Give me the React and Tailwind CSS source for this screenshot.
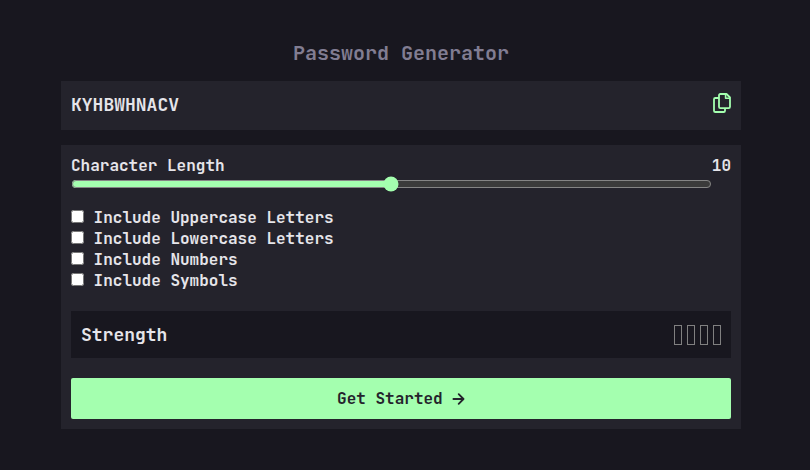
import { useState } from "react";

const OPTIONS = [
  "Include Uppercase Letters",
  "Include Lowercase Letters",
  "Include Numbers",
  "Include Symbols",
];

function CopyIcon() {
  return (
    <svg width="18" height="20" viewBox="0 0 18 20" fill="none" stroke="currentColor" strokeWidth="1.8" strokeLinejoin="round">
      <path d="M7.3 1h6.2L17 4.5v9.3a1.3 1.3 0 0 1-1.3 1.3H7.3A1.3 1.3 0 0 1 6 13.8V2.3A1.3 1.3 0 0 1 7.3 1z" />
      <path d="M12.6 1v4.3H17" strokeWidth="1.6" />
      <path d="M6 5H2.3A1.3 1.3 0 0 0 1 6.3v11.4A1.3 1.3 0 0 0 2.3 19h8.4a1.3 1.3 0 0 0 1.3-1.3v-2.5" />
    </svg>
  );
}

function ArrowIcon() {
  return (
    <svg className="h-[12px] w-[12.6px]" viewBox="0 0 12.6 12" fill="none" stroke="currentColor" strokeWidth="1.8" strokeLinecap="round" strokeLinejoin="round">
      <path d="M1.4 6h10M6.7 1.1L11.5 6 6.7 10.9" />
    </svg>
  );
}

export default function App() {
  const [length, setLength] = useState(10);
  return (
    <main className="h-[470px] overflow-hidden bg-[#18171f] pt-[40px] pl-[61px] font-['JetBrains_Mono','DejaVu_Sans_Mono',monospace] text-base font-bold text-[#e6e5ea]">
      <div className="w-[680px]">
        <h1 className="mb-[15px] h-[26px] text-center text-[20px] leading-[26px] text-[#817d92]">Password Generator</h1>
        <div className="mb-[15px] flex h-[49px] items-start justify-between bg-[#24232c] px-[10px] pt-[12px]">
          <span className="text-[18px] leading-[24px]">KYHBWHNACV</span>
          <button className="text-[#a4ffaf]" aria-label="Copy password">
            <CopyIcon />
          </button>
        </div>
        <section className="h-[284px] bg-[#24232c] px-[10px] pt-[10px]">
          <div className="flex h-[21px] justify-between leading-[21px]">
            <span>Character Length</span>
            <span>{length}</span>
          </div>
          <input
            type="range"
            min="0"
            max="20"
            value={length}
            onChange={(e) => setLength(Number(e.target.value))}
            className="block h-[16px] w-[640.6px] accent-[#a4ffaf]"
            aria-label="Character length"
          />
          <div className="mt-[15px]">
            {OPTIONS.map((option) => (
              <label key={option} className="flex h-[21px] gap-[9.6px] leading-[21px]">
                <input type="checkbox" className="mt-[3px] h-[13px] w-[13px]" />
                {option}
              </label>
            ))}
          </div>
          <div className="mt-[20px] flex h-[47px] items-center justify-between bg-[#18171f] px-[10px]">
            <span className="text-[18px] leading-[24px]">Strength</span>
            <div className="flex gap-[5px]">
              {[1, 2, 3, 4].map((bar) => (
                <span key={bar} className="h-[20px] w-[8px] border border-[#808080]" />
              ))}
            </div>
          </div>
          <button className="mt-[20px] flex h-[41px] w-full items-center justify-center gap-[9.6px] rounded-[2px] bg-[#a4ffaf] text-[#24232c]">
            <span>Get Started</span>
            <ArrowIcon />
          </button>
        </section>
      </div>
    </main>
  );
}
